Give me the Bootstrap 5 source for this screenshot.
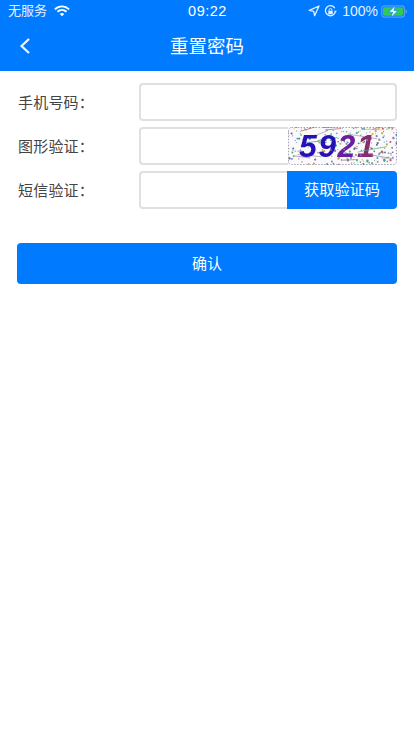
<!DOCTYPE html>
<html lang="zh-CN">
<head>
<meta charset="utf-8">
<title>重置密码</title>
<link href="https://cdn.jsdelivr.net/npm/bootstrap@5.3.0/dist/css/bootstrap.min.css" rel="stylesheet">
<style>
html,body{height:100%;background:#fff;}
body{font-family:"Liberation Sans","Noto Sans CJK SC",sans-serif;overflow:hidden;}
.app-head{background:#007aff;height:71px;color:#fff;}
.status-row{height:22px;padding:0 6px 0 8px;font-size:13px;line-height:22px;color:#e6f1ff;position:relative;}
.status-time{position:absolute;left:1px;right:0;text-align:center;font-size:14.5px;letter-spacing:.5px;color:#fff;}
.status-left,.status-right{position:relative;}
.status-pct{font-size:14px;margin-left:5px;}
.wifi-ico{margin-left:7px;}
.batt-ico{margin-left:3px;}
.title-row{height:49px;position:relative;}
.back-btn{position:absolute;left:19px;top:15px;line-height:0;}
.page-title{font-size:18.5px;font-weight:400;margin:0;line-height:50px;text-align:center;color:#fff;}
.form-zone{padding:12px 17px 0;}
.field-row{height:38px;margin-bottom:6px;}
.field-label{width:122px;font-size:15px;color:#444;flex:none;padding:2px 0 0 1px;letter-spacing:.2px;}
.field-box{flex:1;height:38px;border:2px solid #e0e0e0;border-radius:4px;min-width:0;display:flex;background:#fff;}
.field-box input{flex:1;min-width:0;border:0;outline:0;background:transparent;padding:0 8px;}
.captcha-pic{width:109px;height:38px;margin:-2px -2px -2px 0;flex:none;border-radius:0 4px 4px 0;overflow:hidden;}
.captcha-pic svg{display:block;filter:blur(.45px);}
.sms-btn{width:110px;height:38px;margin:-2px -2px -2px 0;flex:none;border:0;border-radius:0 4px 4px 0;background:#007aff;color:#fff;font-size:15.2px;padding:1px 0 0;}
.ok-btn{margin-top:28px;height:41px;width:100%;background:#007aff;border:0;border-radius:4px;color:#fff;font-size:15px;padding:2px 0 0;}
</style>
</head>
<body>
<header class="app-head">
  <div class="status-row d-flex align-items-center justify-content-between">
    <span class="status-time">09:22</span>
    <div class="status-left d-flex align-items-center">
      <span>无服务</span>
      <svg width="16" height="12" viewBox="0 0 18 13" class="wifi-ico"><path d="M1 4.600C5.600.2 12.400.2 17 4.600" fill="none" stroke="#fff" stroke-width="2.100"/><path d="M3.900 7.400c3-2.800 7.200-2.800 10.200 0" fill="none" stroke="#fff" stroke-width="2.100"/><path d="M6.500 9.800c1.500-1.300 3.500-1.300 5 0L9 12.400z" fill="#fff"/></svg>
    </div>
    <div class="status-right d-flex align-items-center">
      <svg width="12" height="12" viewBox="0 0 12 12"><path d="M11 1 1.300 5.400 5.700 6.300 6.600 10.700z" fill="none" stroke="#e6f1ff" stroke-width="1.300" stroke-linejoin="round"/></svg>
      <svg width="13" height="13" viewBox="0 0 13 13" class="ms-1"><path d="M10.800 3.200A5 5 0 1 0 11.400 6.500" fill="none" stroke="#e6f1ff" stroke-width="1.300"/><path d="M10 5.800h3L11.500 7.600z" fill="#e6f1ff"/><rect x="4.300" y="5.800" width="4.400" height="3.400" fill="#e6f1ff"/><path d="M5.200 5.800V4.800a1.300 1.300 0 0 1 2.600 0v1" fill="none" stroke="#e6f1ff"/></svg>
      <span class="status-pct">100%</span>
      <svg width="27" height="13" viewBox="0 0 28 13" class="batt-ico"><rect x=".7" y=".7" width="23.600" height="11.600" rx="3" fill="none" stroke="#5a9ff0" stroke-width="1.200"/><rect x="2" y="2" width="21" height="9" rx="1.800" fill="#34c759"/><path d="M25.500 4.500c1 .2 1.500 1 1.500 2s-.5 1.800-1.500 2z" fill="#5a9ff0"/><path d="M15 0 8 7.300h4L10.300 13l7.200-7.600h-4z" fill="#fff" stroke="#007aff" stroke-width=".7"/></svg>
    </div>
  </div>
  <div class="title-row">
    <a class="back-btn" href="#" aria-label="返回"><svg width="12" height="18" viewBox="0 0 12 18"><path d="M10 2 2.500 9 10 16" fill="none" stroke="#f2f7ff" stroke-width="2.200"/></svg></a>
    <h1 class="page-title">重置密码</h1>
  </div>
</header>
<main class="form-zone">
  <form>
    <div class="field-row d-flex align-items-center">
      <label class="field-label" for="f1">手机号码：</label>
      <div class="field-box"><input id="f1" type="text"></div>
    </div>
    <div class="field-row d-flex align-items-center">
      <label class="field-label" for="f2">图形验证：</label>
      <div class="field-box"><input id="f2" type="text">
        <div class="captcha-pic">
          <svg id="cap" width="109" height="38" viewBox="0 0 109 38">
            <rect width="109" height="38" fill="#fafafc"/>
            <rect x=".5" y=".5" width="108" height="37" rx="3" fill="none" stroke="#a8a0b8" stroke-width="1" stroke-dasharray="1.500 1.500"/>
            <g id="noise"></g>
            <text x="11" y="30" font-family="Liberation Sans, sans-serif" font-size="32" font-weight="700" font-style="italic" fill="#2412b8" letter-spacing="1.500">59<tspan fill="#6a1fa0">2</tspan><tspan fill="#8a2a70">1</tspan></text>
            <g id="noise2"></g>
          </svg>
        </div>
      </div>
    </div>
    <div class="field-row d-flex align-items-center">
      <label class="field-label" for="f3">短信验证：</label>
      <div class="field-box"><input id="f3" type="text"><button type="button" class="sms-btn btn">获取验证码</button></div>
    </div>
    <button type="button" class="ok-btn btn">确认</button>
  </form>
</main>
<script>
(function(){
  var s=7,cols=['#8a80c0','#4ab36a','#c05a5a','#4a8ad8','#9a9a9a','#c8a840','#666688','#40a0a0'];
  function r(){s=(s*16807)%2147483647;return s/2147483647;}
  function fill(id,n,max,lines){
    var g=document.getElementById(id),h='';
    for(var i=0;i<n;i++){
      h+='<circle cx="'+(r()*109).toFixed(1)+'" cy="'+(r()*38).toFixed(1)+'" r="'+(.4+r()*max).toFixed(1)+'" fill="'+cols[Math.floor(r()*cols.length)]+'"/>';
    }
    for(var j=0;j<lines;j++){
      var x=r()*90,y=r()*38;
      h+='<line x1="'+x.toFixed(1)+'" y1="'+y.toFixed(1)+'" x2="'+(x+10+r()*20).toFixed(1)+'" y2="'+(y+r()*12-6).toFixed(1)+'" stroke="'+cols[Math.floor(r()*cols.length)]+'" stroke-width=".7"/>';
    }
    g.innerHTML=h;
  }
  fill('noise',190,.8,12);
  fill('noise2',35,.6,3);
})();
</script>
<script src="https://cdn.jsdelivr.net/npm/bootstrap@5.3.0/dist/js/bootstrap.bundle.min.js"></script>
</body>
</html>
